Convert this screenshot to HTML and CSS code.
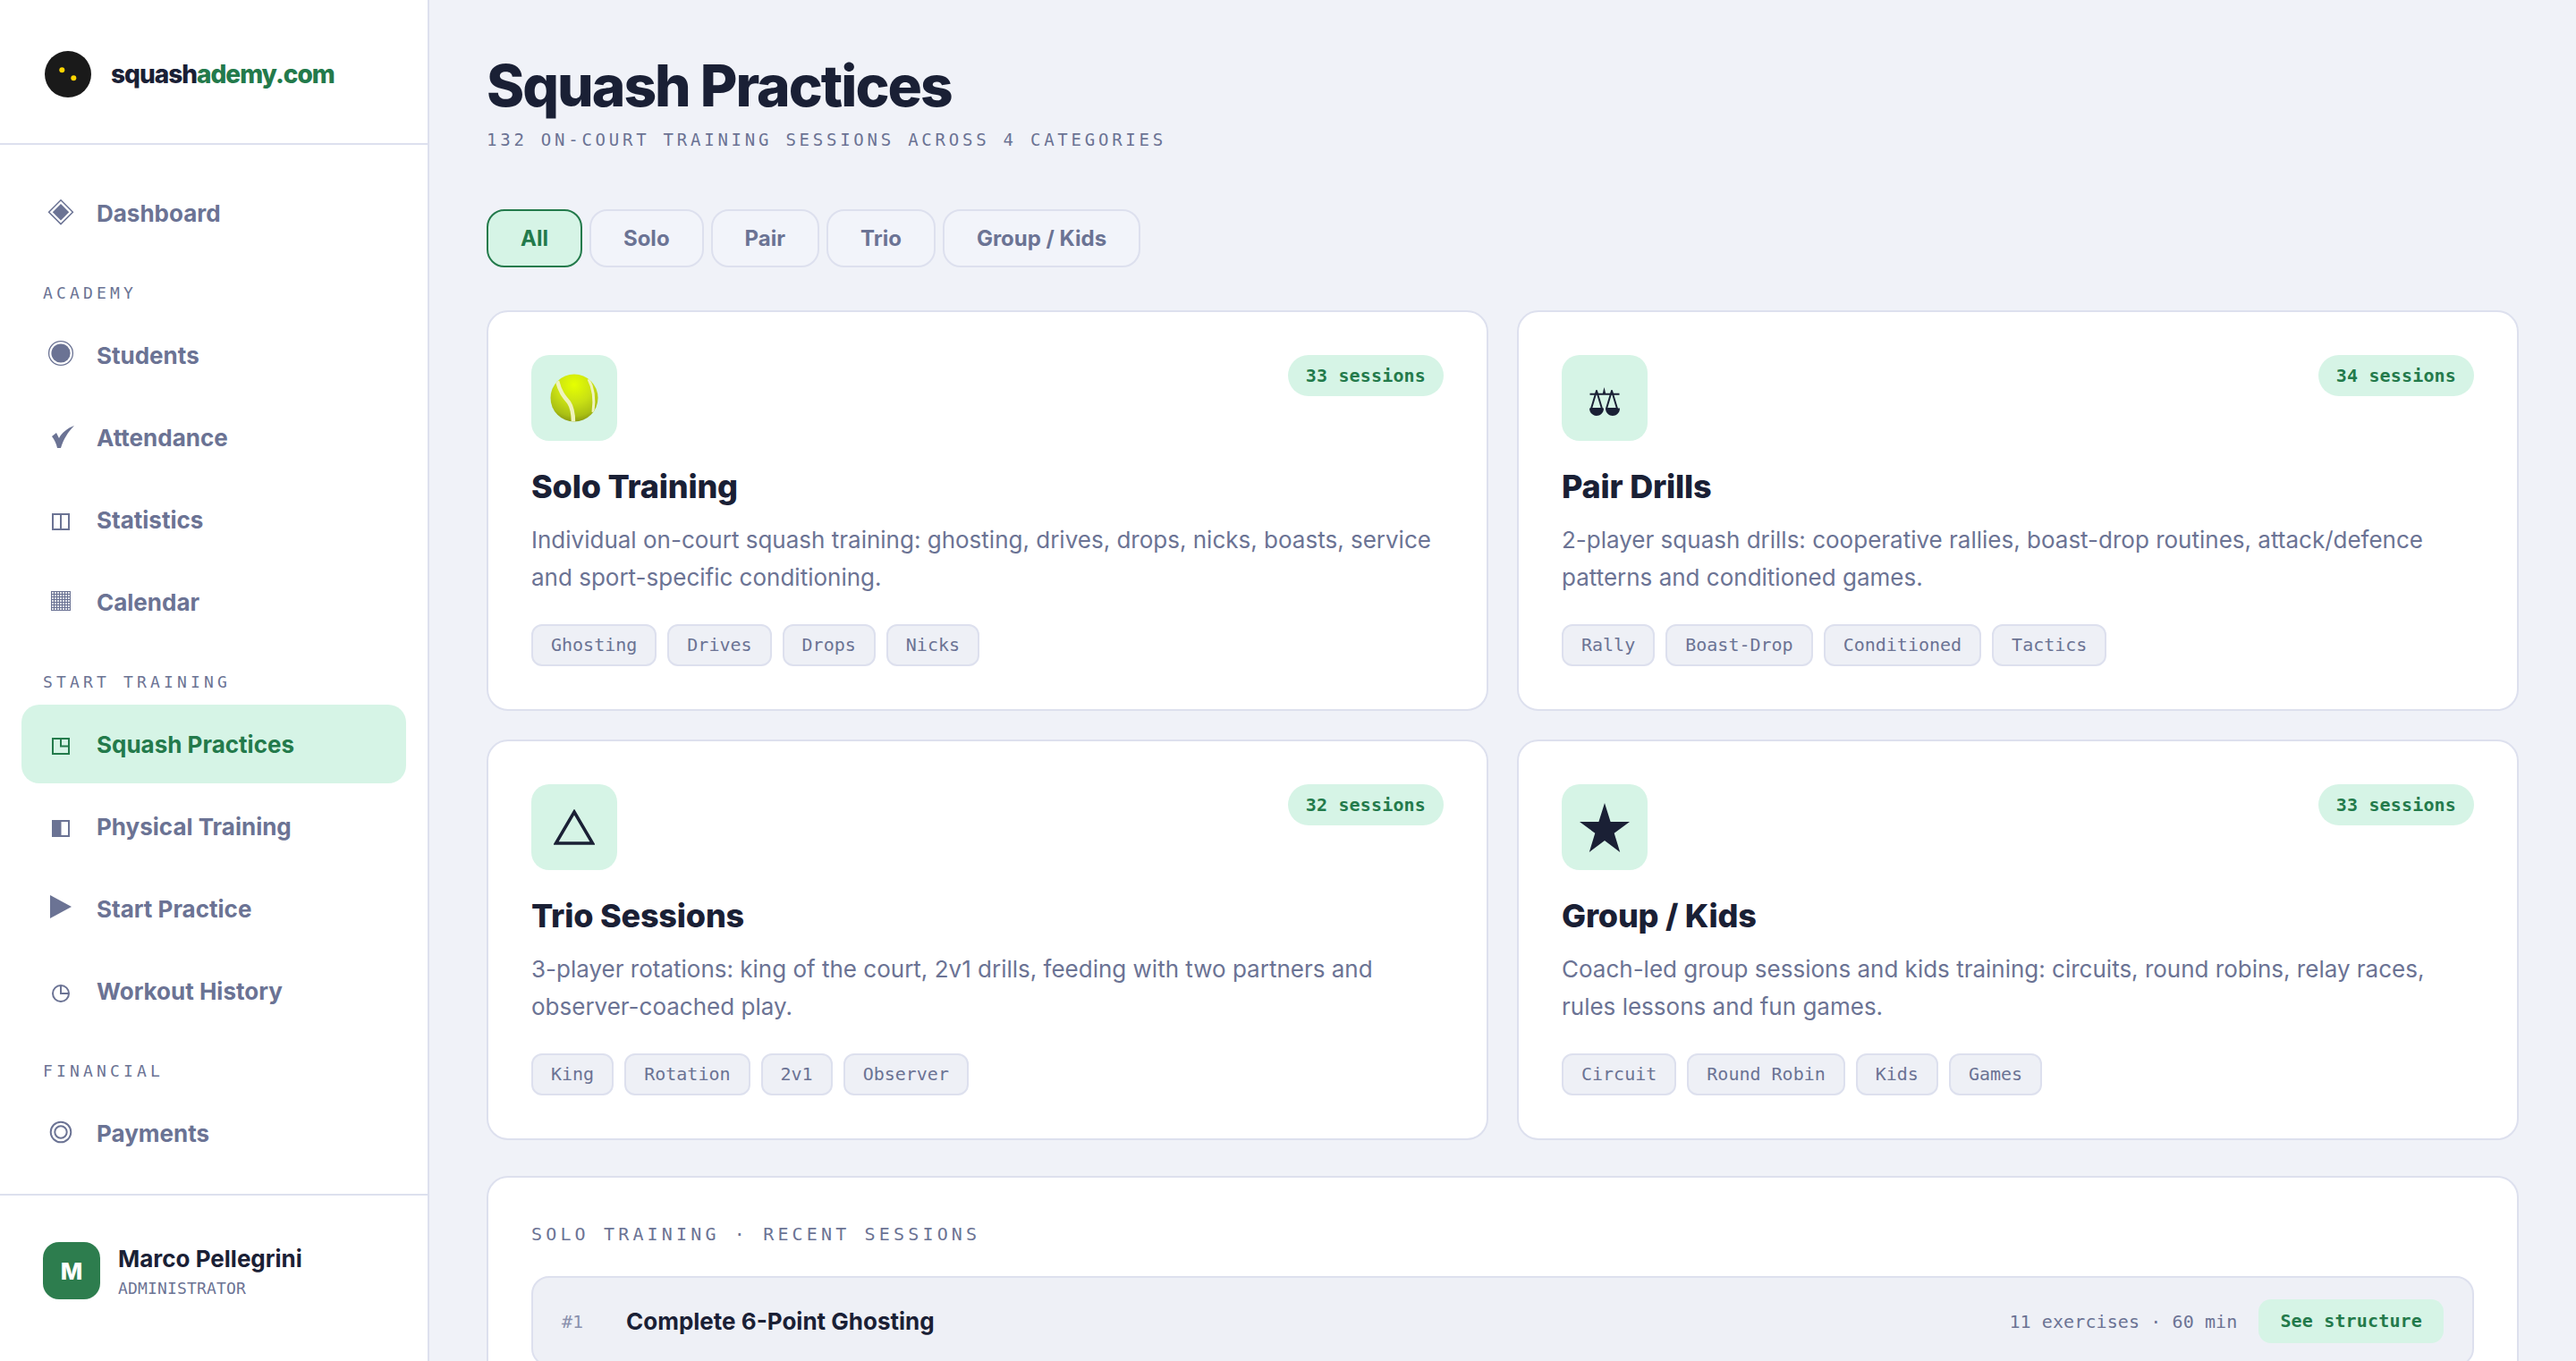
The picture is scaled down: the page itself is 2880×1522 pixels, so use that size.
FILE: index.html
```html
<!DOCTYPE html>
<html lang="en">
<head>
<meta charset="utf-8">
<title>Squash Practices</title>
<link rel="stylesheet" href="styles.css">
</head>
<body>
<div class="app">
  <aside class="sidebar">
    <div class="brand">
      <svg class="brand-logo" viewBox="0 0 56 56"><circle cx="28" cy="28" r="26" fill="#1a1a1a"/><circle cx="21.3" cy="23.3" r="3" fill="#ffd500"/><circle cx="34.3" cy="32.3" r="3" fill="#ffd500"/></svg>
      <span class="brand-name">squash<em>ademy.com</em></span>
    </div>
    <nav class="nav">
      <a class="nav-item"><svg class="nav-icon" viewBox="0 0 32 32"><path d="M16 1.8 29.4 15.2 16 28.6 2.6 15.2Z" fill="none" stroke="currentColor" stroke-width="1.5"/><path d="M16 6 25.2 15.2 16 24.4 6.8 15.2Z" fill="currentColor"/></svg>Dashboard</a>
      <div class="nav-label">ACADEMY</div>
      <a class="nav-item"><svg class="nav-icon" viewBox="0 0 32 32"><circle cx="16" cy="14" r="13.4" fill="none" stroke="currentColor" stroke-width="1.3"/><circle cx="16" cy="14" r="10.6" fill="currentColor"/></svg>Students</a>
      <a class="nav-item"><svg class="nav-icon" viewBox="0 0 32 32"><path d="M6 15 11 11 14 17C17 11 23 6 31 3 24 10 19 18 16 28H12C11 23 9 19 6 15Z" fill="currentColor"/></svg>Attendance</a>
      <a class="nav-item"><svg class="nav-icon" viewBox="0 0 32 32"><path d="M7 10H25V27H7ZM16 10V27" fill="none" stroke="currentColor" stroke-width="2"/></svg>Statistics</a>
      <a class="nav-item"><svg class="nav-icon" viewBox="0 0 32 32"><defs><pattern id="grid" width="3" height="3" patternUnits="userSpaceOnUse" x="5" y="4"><rect width="3" height="3" fill="currentColor"/><rect x="1" y="1" width="2" height="2" fill="#fff" opacity=".8"/></pattern></defs><rect x="5" y="4" width="22" height="22" fill="url(#grid)"/></svg>Calendar</a>
      <div class="nav-label">START TRAINING</div>
      <a class="nav-item is-active"><svg class="nav-icon" viewBox="0 0 32 32"><path d="M7 10H25V27H7ZM16 10V18.500H25" fill="none" stroke="currentColor" stroke-width="2"/></svg>Squash Practices</a>
      <a class="nav-item"><svg class="nav-icon" viewBox="0 0 32 32"><path d="M7 10H25V27H7Z" fill="none" stroke="currentColor" stroke-width="2"/><rect x="6" y="9" width="10.500" height="19" fill="currentColor"/></svg>Physical Training</a>
      <a class="nav-item"><svg class="nav-icon" viewBox="0 0 32 32"><path d="M4 1 28 14 4 27Z" fill="currentColor"/></svg>Start Practice</a>
      <a class="nav-item"><svg class="nav-icon" viewBox="0 0 32 32"><circle cx="16" cy="19" r="9" fill="none" stroke="currentColor" stroke-width="2"/><path d="M16 10V19H25" fill="none" stroke="currentColor" stroke-width="2"/></svg>Workout History</a>
      <div class="nav-label">FINANCIAL</div>
      <a class="nav-item"><svg class="nav-icon" viewBox="0 0 32 32"><circle cx="16" cy="15" r="11.300" fill="none" stroke="currentColor" stroke-width="2"/><circle cx="16" cy="15" r="6.700" fill="none" stroke="currentColor" stroke-width="2"/></svg>Payments</a>
    </nav>
    <div class="user">
      <div class="avatar">M</div>
      <div class="user-text">
        <div class="user-name">Marco Pellegrini</div>
        <div class="user-role">ADMINISTRATOR</div>
      </div>
    </div>
  </aside>
  <main class="main">
    <h1 class="page-title">Squash Practices</h1>
    <p class="page-sub">132 ON-COURT TRAINING SESSIONS ACROSS 4 CATEGORIES</p>
    <div class="filters">
      <button class="filter is-active">All</button>
      <button class="filter">Solo</button>
      <button class="filter">Pair</button>
      <button class="filter">Trio</button>
      <button class="filter">Group / Kids</button>
    </div>
    <section class="cards">
      <article class="card">
        <header class="card-top">
          <div class="card-icon">
            <svg class="ball" viewBox="0 0 56 56"><defs><radialGradient id="ballfill" cx="50%" cy="22%" r="78%"><stop offset="0" stop-color="#e6ff00"/><stop offset=".5" stop-color="#c9e014"/><stop offset=".85" stop-color="#a9bf14"/><stop offset="1" stop-color="#8b9c10"/></radialGradient><clipPath id="ballclip"><circle cx="28" cy="28" r="26.500"/></clipPath></defs><circle cx="28" cy="28" r="26.500" fill="url(#ballfill)"/><g clip-path="url(#ballclip)" fill="none" stroke="#eff3bd"><path d="M9 9C12 21 16 26 22 33 26 39 27 47 27 56" stroke-width="4.500"/><path d="M44 7C50 18 51 30 49 44" stroke-width="3"/></g></svg>
          </div>
          <span class="badge">33 sessions</span>
        </header>
        <h2 class="card-title">Solo Training</h2>
        <p class="card-desc">Individual on-court squash training: ghosting, drives, drops, nicks, boasts, service and sport-specific conditioning.</p>
        <div class="tags"><span class="tag">Ghosting</span><span class="tag">Drives</span><span class="tag">Drops</span><span class="tag">Nicks</span></div>
      </article>
      <article class="card">
        <header class="card-top">
          <div class="card-icon">
            <svg class="scale" viewBox="0 0 34 32"><path d="M16.500 0 18.200 7H14.800Z" fill="#1a2035"/><path d="M0.500 7.800H33.500" stroke="#1a2035" stroke-width="2"/><path d="M8 4 2 24H14ZM25 4 19 24H31Z" fill="none" stroke="#1a2035" stroke-width="2" stroke-linejoin="round"/><path d="M0 23.500H16C16 29 12 32 8 32S0 29 0 23.500ZM18 23.500H34C34 29 30 32 26 32S18 29 18 23.500Z" fill="#1a2035"/></svg>
          </div>
          <span class="badge">34 sessions</span>
        </header>
        <h2 class="card-title">Pair Drills</h2>
        <p class="card-desc">2-player squash drills: cooperative rallies, boast-drop routines, attack/defence patterns and conditioned games.</p>
        <div class="tags"><span class="tag">Rally</span><span class="tag">Boast-Drop</span><span class="tag">Conditioned</span><span class="tag">Tactics</span></div>
      </article>
      <article class="card">
        <header class="card-top">
          <div class="card-icon">
            <svg class="triangle" viewBox="0 0 46 40"><path d="M23 3 43.500 38H2.500Z" fill="none" stroke="#1a2035" stroke-width="3.500"/></svg>
          </div>
          <span class="badge">32 sessions</span>
        </header>
        <h2 class="card-title">Trio Sessions</h2>
        <p class="card-desc">3-player rotations: king of the court, 2v1 drills, feeding with two partners and observer-coached play.</p>
        <div class="tags"><span class="tag">King</span><span class="tag">Rotation</span><span class="tag">2v1</span><span class="tag">Observer</span></div>
      </article>
      <article class="card">
        <header class="card-top">
          <div class="card-icon">
            <svg class="star" viewBox="0 0 56 55"><path d="M28 0 34.600 21H56L38.700 33.800 45.200 55 28 42 10.800 55 17.300 33.800 0 21H21.400Z" fill="#1a2035"/></svg>
          </div>
          <span class="badge">33 sessions</span>
        </header>
        <h2 class="card-title">Group / Kids</h2>
        <p class="card-desc">Coach-led group sessions and kids training: circuits, round robins, relay races, rules lessons and fun games.</p>
        <div class="tags"><span class="tag">Circuit</span><span class="tag">Round Robin</span><span class="tag">Kids</span><span class="tag">Games</span></div>
      </article>
    </section>
    <section class="panel">
      <h3 class="panel-title">SOLO TRAINING · RECENT SESSIONS</h3>
      <div class="session">
        <span class="session-num">#1</span>
        <span class="session-name">Complete 6-Point Ghosting</span>
        <span class="session-meta">11 exercises · 60 min</span>
        <span class="session-btn">See structure</span>
      </div>
    </section>
  </main>
</div>
</body>
</html>
```
FILE: styles.css
```css
* { box-sizing: border-box; }
html, body { margin: 0; height: 100%; overflow: hidden; }
body {
  background: #f0f2f8;
  color: #1a2035;
  font-family: Inter, "Liberation Sans", sans-serif;
}
.app { display: flex; height: 100vh; }

/* Sidebar */
.sidebar {
  flex: 0 0 480px;
  display: flex;
  flex-direction: column;
  background: #fff;
  border-right: 2px solid #dde0ee;
}
.brand {
  display: flex;
  align-items: center;
  gap: 20px;
  height: 162px;
  padding: 6px 48px 0;
  border-bottom: 2px solid #dde0ee;
}
.brand-logo { width: 56px; height: 56px; flex: none; }
.brand-name { font-size: 28px; font-weight: 800; letter-spacing: -1px; color: #1a2035; }
.brand-name em { font-style: normal; color: #237a4b; }
.nav { flex: 1; display: flex; flex-direction: column; gap: 4px; padding: 32px 24px 0; }
.nav-item {
  display: flex;
  align-items: center;
  gap: 24px;
  height: 88px;
  padding-left: 28px;
  border-radius: 20px;
  color: #6b7394;
  font-size: 26px;
  font-weight: 700;
}
.nav-item.is-active { background: #d6f4e6; color: #237a4b; }
.nav-icon { width: 32px; height: 32px; flex: none; overflow: visible; }
.nav-label {
  height: 28px;
  margin: 28px 0 7px;
  padding-left: 24px;
  font-family: "DejaVu Sans Mono", monospace;
  font-size: 18px;
  line-height: 28px;
  letter-spacing: 4.16px;
  color: #6b7394;
}
.user {
  display: flex;
  align-items: flex-start;
  gap: 20px;
  height: 187px;
  padding: 52px 48px 0;
  border-top: 2px solid #dde0ee;
}
.avatar {
  display: flex;
  align-items: center;
  justify-content: center;
  width: 64px;
  height: 64px;
  flex: none;
  border-radius: 18px;
  background: #2d7d4e;
  color: #fff;
  font-size: 26px;
  font-weight: 800;
}
.user-name { font-size: 26px; font-weight: 700; line-height: 38px; color: #1a2035; }
.user-role {
  margin-top: 1px;
  font-family: "DejaVu Sans Mono", monospace;
  font-size: 18px;
  letter-spacing: 0.16px;
  line-height: 26px;
  color: #6b7394;
}

/* Main */
.main { flex: 1; min-width: 0; padding: 54px 64px 0; overflow: hidden; }
.page-title {
  margin: 0;
  font-size: 64px;
  line-height: 84px;
  font-weight: 800;
  letter-spacing: -2px;
  color: #1a2035;
}
.page-sub {
  margin: 4px 0 0;
  font-family: "DejaVu Sans Mono", monospace;
  font-size: 19px;
  line-height: 28px;
  letter-spacing: 3.76px;
  color: #6b7394;
}
.filters { display: flex; gap: 8px; margin-top: 64px; }
.filter {
  height: 65px;
  padding: 0 36px;
  border: 2px solid #dde0ee;
  border-radius: 20px;
  background: #f2f4fa;
  color: #6b7394;
  font-family: inherit;
  font-size: 24px;
  font-weight: 700;
}
.filter.is-active { background: #d6f4e6; border-color: #237a4b; color: #237a4b; }
.cards {
  display: grid;
  grid-template-columns: 1fr 1fr;
  gap: 32px;
  margin-top: 48px;
}
.card {
  height: 448px;
  padding: 48px;
  background: #fff;
  border: 2px solid #dde0ee;
  border-radius: 24px;
}
.card-top { display: flex; justify-content: space-between; align-items: flex-start; }
.card-icon {
  display: flex;
  align-items: center;
  justify-content: center;
  width: 96px;
  height: 96px;
  border-radius: 20px;
  background: #d6f4e6;
}
.ball { width: 56px; height: 56px; }
.scale { width: 34px; height: 32px; margin-top: 8px; }
.triangle { width: 46px; height: 40px; }
.star { width: 56px; height: 55px; }
.badge {
  height: 46px;
  padding: 0 20px;
  border-radius: 23px;
  background: #d6f4e6;
  color: #237a4b;
  font-family: "DejaVu Sans Mono", monospace;
  font-size: 20px;
  font-weight: 700;
  line-height: 46px;
  letter-spacing: 0.16px;
}
.card-title { margin: 29px 0 0; font-size: 36px; line-height: 45px; font-weight: 800; letter-spacing: -0.2px; color: #1a2035; }
.card-desc { margin: 16px 0 0; font-size: 26px; line-height: 42px; color: #6b7394; }
.tags { display: flex; gap: 12px; margin-top: 31px; }
.tag {
  height: 47px;
  padding: 0 20px;
  border: 2px solid #dde0ee;
  border-radius: 12px;
  background: #eef0f6;
  color: #6b7394;
  font-family: "DejaVu Sans Mono", monospace;
  font-size: 20px;
  line-height: 43px;
}
.panel {
  height: 260px;
  margin-top: 40px;
  padding: 48px;
  background: #fff;
  border: 2px solid #dde0ee;
  border-radius: 24px;
}
.panel-title {
  margin: 0;
  font-family: "DejaVu Sans Mono", monospace;
  font-size: 20px;
  font-weight: 400;
  line-height: 30px;
  height: 30px;
  letter-spacing: 4.16px;
  color: #6b7394;
}
.session {
  display: flex;
  align-items: center;
  height: 101px;
  margin-top: 32px;
  padding: 0 32px;
  background: #eef0f6;
  border: 2px solid #dde0ee;
  border-radius: 20px;
}
.session-num {
  flex: 0 0 72px;
  font-family: "DejaVu Sans Mono", monospace;
  font-size: 20px;
  color: #8a91ad;
}
.session-name { flex: 1; font-size: 26px; font-weight: 700; color: #1a2035; }
.session-meta {
  font-family: "DejaVu Sans Mono", monospace;
  font-size: 20px;
  line-height: 26px;
  letter-spacing: 0.1px;
  color: #6b7394;
}
.session-btn {
  height: 49px;
  margin-left: 24px;
  padding: 0 24px;
  border-radius: 14px;
  background: #d6f4e6;
  color: #237a4b;
  font-family: "DejaVu Sans Mono", monospace;
  font-size: 20px;
  font-weight: 700;
  line-height: 49px;
  letter-spacing: 0.16px;
}
```
